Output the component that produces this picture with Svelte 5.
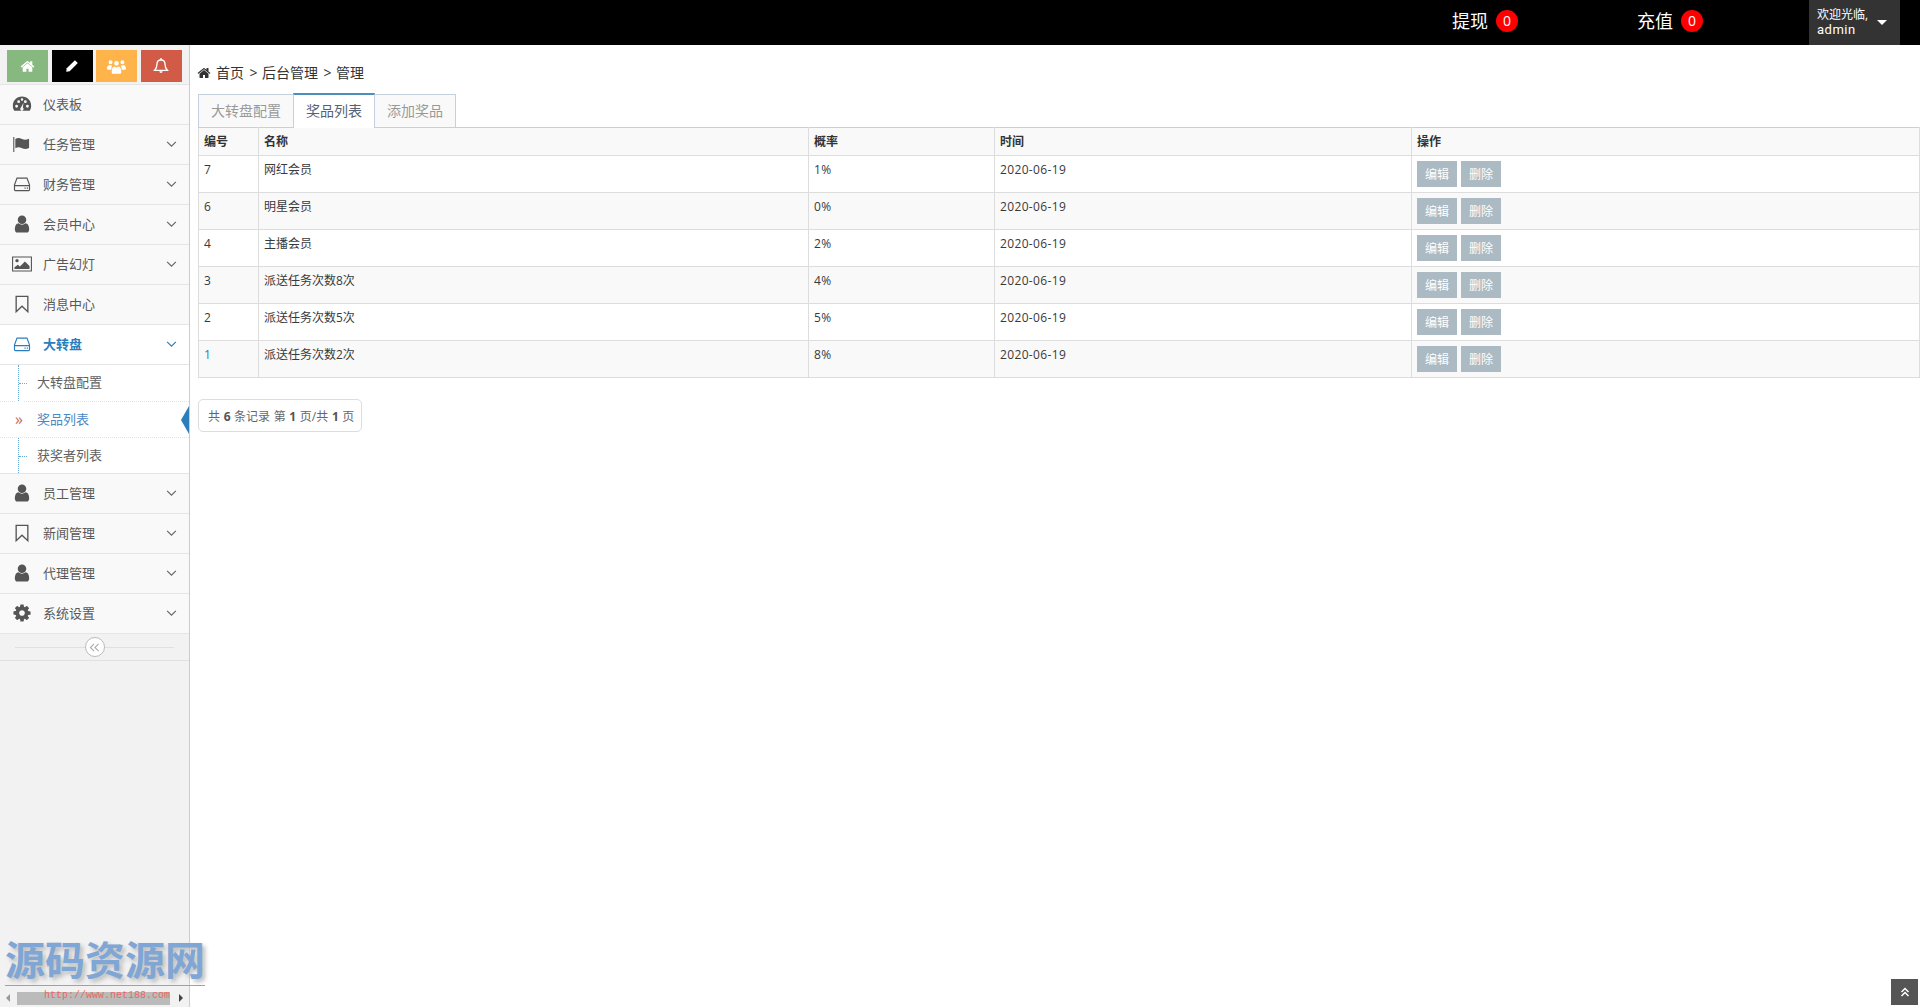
<script>
  const home = "M1472 992v480q0 26-19 45t-45 19h-384v-384h-256v384h-384q-26 0-45-19t-19-45v-480q0-1 .5-3t.5-3l575-474 575 474q1 2 1 6zm223-69l-62 74q-8 9-21 11h-3q-13 0-21-7l-692-577-692 577q-12 8-24 7-13-2-21-11l-62-74q-8-10-7-23.5t11-21.5l719-599q32-26 76-26t76 26l244 204v-195q0-14 9-23t23-9h192q14 0 23 9t9 23v408l219 182q10 8 11 21.5t-7 23.5z";
  const user = "M1536 1399q0 109-62.5 187t-150.5 78h-854q-88 0-150.5-78t-62.5-187q0-85 8.5-160.5t31.5-152 58.5-131 94-89 134.5-34.5q131 128 313 128t313-128q76 0 134.5 34.5t94 89 58.5 131 31.5 152 8.5 160.5zm-256-887q0 159-112.5 271.5t-271.5 112.5-271.5-112.5-112.5-271.5 112.5-271.5 271.5-112.5 271.5 112.5 112.5 271.5z";
  const cog = "M1152 896q0-106-75-181t-181-75-181 75-75 181 75 181 181 75 181-75 75-181zm512-109v222q0 12-8 23t-20 13l-185 28q-19 54-39 91 35 50 107 138 10 12 10 25t-9 23q-27 37-99 108t-94 71q-12 0-26-9l-138-108q-44 23-91 38-16 136-29 186-7 28-36 28h-222q-14 0-24.5-8.5t-11.5-21.5l-28-184q-49-16-90-37l-141 107q-10 9-25 9-14 0-25-11-126-114-165-168-7-10-7-23 0-12 8-23 15-21 51-66.5t54-70.5q-27-50-41-99l-183-27q-13-2-21-12.5t-8-23.5v-222q0-12 8-23t19-13l186-28q14-46 39-92-40-57-107-138-10-12-10-24 0-10 9-23 26-36 98.5-107.5t94.5-71.5q13 0 26 10l138 107q44-23 91-38 16-136 29-186 7-28 36-28h222q14 0 24.5 8.5t11.5 21.5l28 184q49 16 90 37l142-107q9-9 24-9 13 0 25 10 129 119 165 170 7 8 7 22 0 12-8 23-15 21-51 66.5t-54 70.5q26 50 41 98l183 28q13 2 21 12.5t8 23.5z";

  const navTop = [
    { label: "仪表板", icon: "gauge" },
    { label: "任务管理", icon: "flag", arrow: true },
    { label: "财务管理", icon: "hdd", arrow: true },
    { label: "会员中心", icon: "user", arrow: true },
    { label: "广告幻灯", icon: "picture", arrow: true },
    { label: "消息中心", icon: "bookmark" },
  ];
  const navBottom = [
    { label: "员工管理", icon: "user", arrow: true },
    { label: "新闻管理", icon: "bookmark", arrow: true },
    { label: "代理管理", icon: "user", arrow: true },
    { label: "系统设置", icon: "cog", arrow: true },
  ];
  const rows = [
    { id: 7, name: "网红会员", rate: "1%" },
    { id: 6, name: "明星会员", rate: "0%" },
    { id: 4, name: "主播会员", rate: "2%" },
    { id: 3, name: "派送任务次数8次", rate: "4%" },
    { id: 2, name: "派送任务次数5次", rate: "5%" },
    { id: 1, name: "派送任务次数2次", rate: "8%", link: true },
  ];
</script>

{#snippet navIcon(name)}
  {#if name === "gauge"}
    <svg class="ico" viewBox="0 0 24 24" width="20" height="20"><path fill="currentColor" fill-rule="evenodd" d="M12 3C5.6 3 1 8 1 14c0 2.2.6 4.200 1.700 6h18.600c1.100-1.800 1.700-3.800 1.700-6 0-6-4.600-11-11-11zM5.500 13a1.700 1.700 0 1 1 0 3.400 1.700 1.700 0 0 1 0-3.400zM8 7.500a1.700 1.700 0 1 1 0 3.400 1.700 1.700 0 0 1 0-3.400zM13.500 6.500a1.500 1.500 0 1 1-3 0 1.500 1.500 0 0 1 3 0zM18.500 13a1.700 1.700 0 1 1 0 3.400 1.700 1.700 0 0 1 0-3.400zM16 7.500a1.700 1.700 0 1 1 0 3.400 1.700 1.700 0 0 1 0-3.400zM13.800 10.500l-.8 5.700a2 2 0 1 1-2.200 0z"/></svg>
  {:else if name === "flag"}
    <svg class="ico" viewBox="0 0 24 24" width="20" height="20"><path fill="currentColor" d="M1.500 3.500h1.300v18H1.500zM4 6c3-1.600 5-1.200 8 0s5 1 8.500-.4v11.200c-3.500 1.400-5.500 1.400-8.500.2s-5-1.500-8 0z"/></svg>
  {:else if name === "hdd"}
    <svg class="ico" viewBox="0 0 24 24" width="20" height="20"><path fill="none" stroke="currentColor" stroke-width="1.400" d="M6 5h12l3 8v6a1 1 0 0 1-1 1H4a1 1 0 0 1-1-1v-6zM3 14h18"/><path fill="currentColor" d="M15 16.200h1.400v1.400H15zM17.800 16.200h1.400v1.400h-1.400z"/></svg>
  {:else if name === "user"}
    <svg class="ico" viewBox="0 0 1792 1792" width="20" height="20"><path fill="currentColor" d={user}/></svg>
  {:else if name === "picture"}
    <svg class="ico" viewBox="0 0 24 24" width="20" height="20"><path fill="none" stroke="currentColor" stroke-width="1.300" d="M.7 3.700h22.600v16.600H.7z"/><circle fill="currentColor" cx="6" cy="8" r="2"/><path fill="currentColor" d="M3 18v-2l4-3 2.500 2 6-6 5.500 5.500V18z"/></svg>
  {:else if name === "bookmark"}
    <svg class="ico" viewBox="0 0 24 24" width="20" height="20"><path fill="none" stroke="currentColor" stroke-width="1.600" d="M5 2.800h14v18.400l-7-6.500-7 6.500z"/></svg>
  {:else}
    <svg class="ico" viewBox="0 0 1792 1792" width="20" height="20"><path fill="currentColor" d={cog}/></svg>
  {/if}
{/snippet}

{#snippet chevron()}
  <svg class="chev" viewBox="0 0 12 8" width="11" height="7"><path fill="none" stroke="currentColor" stroke-width="1.300" d="M1 1l5 5 5-5"/></svg>
{/snippet}

{#snippet navRow(item)}
  <li class="nav-item">
    <span class="nav-icon">{@render navIcon(item.icon)}</span>
    <span class="nav-label">{item.label}</span>
    {#if item.arrow}{@render chevron()}{/if}
  </li>
{/snippet}

<div class="page">
  <header class="topbar">
    <div class="top-link"><span class="top-text">提现</span><span class="badge">0</span></div>
    <div class="top-link second"><span class="top-text">充值</span><span class="badge">0</span></div>
    <div class="user-box">
      <span class="user-text">欢迎光临,<br /><span class="user-name">admin</span></span>
      <span class="caret"></span>
    </div>
  </header>

  <div class="body">
    <aside class="sidebar">
      <div class="shortcuts">
        <button class="sc green" aria-label="home"><svg viewBox="0 0 1792 1792" width="15" height="15"><path fill="currentColor" d={home}/></svg></button>
        <button class="sc black" aria-label="edit"><svg viewBox="0 0 24 24" width="14" height="14"><path fill="currentColor" d="M17 2l5 5L8 21l-6 1 1-6z"/></svg></button>
        <button class="sc orange" aria-label="group"><svg viewBox="0 0 24 24" width="19" height="19"><path fill="currentColor" d="M12 5a3 3 0 1 1 0 6 3 3 0 0 1 0-6zM4.500 4a2.500 2.500 0 1 1 0 5 2.500 2.500 0 0 1 0-5zM19.500 4a2.500 2.500 0 1 1 0 5 2.500 2.500 0 0 1 0-5zM0 15c0-3 1.500-5 3.500-5 1 .8 2 1 3 .8C6 12 5.500 13.500 5.500 16H1zM24 15c0-3-1.500-5-3.500-5-1 .8-2 1-3 .8.500 1.200 1 2.700 1 5.200H23zM7 21c-.8 0-1-.6-1-1.500 0-4 1-7.500 3.500-7.500 1.600 1.200 3.400 1.200 5 0 2.500 0 3.500 3.500 3.500 7.500 0 .9-.2 1.500-1 1.500z"/></svg></button>
        <button class="sc red" aria-label="bell"><svg viewBox="0 0 24 24" width="16" height="16"><path fill="none" stroke="currentColor" stroke-width="2" d="M12 3c-4 0-6 2.500-6 6 0 5-1.500 7.500-3.500 9.500h19C19.500 16.500 18 14 18 9c0-3.500-2-6-6-6z"/><path fill="currentColor" d="M9.500 20h5a2.500 2.500 0 0 1-5 0zM11 0h2v3h-2z"/></svg></button>
      </div>

      <ul class="nav">
        {#each navTop as item}
          {@render navRow(item)}
        {/each}
        <li class="nav-item active">
          <span class="nav-icon">{@render navIcon("hdd")}</span>
          <span class="nav-label">大转盘</span>
          {@render chevron()}
        </li>
        <li class="sub">
          <div class="sub-item">大转盘配置</div>
          <div class="sub-item current"><span class="mark">»</span>奖品列表<span class="pointer"></span></div>
          <div class="sub-item">获奖者列表</div>
        </li>
        {#each navBottom as item}
          {@render navRow(item)}
        {/each}
      </ul>

      <div class="collapse">
        <span class="collapse-btn">
          <svg viewBox="0 0 12 10" width="11" height="9"><path fill="none" stroke="#aaa" stroke-width="1.200" d="M5.500 1L1.500 5l4 4M10.500 1l-4 4 4 4"/></svg>
        </span>
      </div>
    </aside>

    <main class="main">
      <div class="crumbs">
        <svg viewBox="0 0 1792 1792" width="14" height="14"><path fill="#333" d={home}/></svg>
        <span>首页</span><span class="sep">&gt;</span><span>后台管理</span><span class="sep">&gt;</span><span>管理</span>
      </div>

      <div class="tabs">
        <div class="tab">大转盘配置</div>
        <div class="tab on">奖品列表</div>
        <div class="tab">添加奖品</div>
      </div>

      <table>
        <colgroup>
          <col style="width:60px" /><col style="width:550px" /><col style="width:186px" /><col style="width:417px" /><col />
        </colgroup>
        <thead>
          <tr><th>编号</th><th>名称</th><th>概率</th><th>时间</th><th>操作</th></tr>
        </thead>
        <tbody>
          {#each rows as row}
            <tr>
              <td class="num" class:link={row.link}>{row.id}</td>
              <td>{row.name}</td>
              <td class="num">{row.rate}</td>
              <td class="num">2020-06-19</td>
              <td class="ops"><button class="op">编辑</button><button class="op">删除</button></td>
            </tr>
          {/each}
        </tbody>
      </table>

      <div class="pager">共 <b>6</b> 条记录 第 <b>1</b> 页/共 <b>1</b> 页</div>
    </main>
  </div>

  <div class="watermark">
    <div class="wm-text">源码资源网</div>
    <div class="wm-url">http://www.net188.com</div>
  </div>
  <div class="hscroll">
    <span class="arrow-l"></span>
    <span class="thumb"></span>
    <span class="arrow-r"></span>
  </div>
  <button class="to-top" aria-label="top"><svg viewBox="0 0 10 10" width="10" height="10"><path fill="none" stroke="#fff" stroke-width="1.500" d="M1.500 5L5 1.500 8.500 5M1.500 9L5 5.500 8.500 9"/></svg></button>
</div>

<style>
  :global(body) {
    margin: 0;
    background: #fff;
    font-family: "Open Sans", "Noto Sans CJK SC", sans-serif;
    font-size: 13px;
    color: #393939;
  }

  .page {
    position: relative;
    height: 1007px;
    overflow: hidden;
  }

  .topbar {
    height: 45px;
    background: #000;
    display: flex;
    align-items: center;
    color: #fff;
    padding-left: 1452px;
  }

  .top-link {
    width: 185px;
    flex: none;
    display: flex;
    align-items: center;
    gap: 8px;
    font-size: 18px;
    padding-bottom: 3px;
  }

  .top-link.second {
    width: 172px;
  }

  .top-text {
    margin-top: -2px;
  }

  .badge {
    width: 22px;
    height: 22px;
    border-radius: 50%;
    background: #f00;
    font-size: 14px;
    line-height: 22px;
    text-align: center;
  }

  .user-box {
    width: 91px;
    height: 45px;
    box-sizing: border-box;
    padding: 0 0 2px 8px;
    background: #333;
    display: flex;
    align-items: center;
    font-size: 12px;
    line-height: 15px;
    position: relative;
  }

  .user-name {
    font-family: Roboto, sans-serif;
    font-size: 13px;
    letter-spacing: 0.5px;
  }

  .caret {
    position: absolute;
    left: 68px;
    top: 20px;
    border: 5px solid transparent;
    border-top-color: #fff;
    border-bottom: 0;
  }

  .body {
    display: flex;
    height: 962px;
  }

  .sidebar {
    width: 190px;
    box-sizing: border-box;
    flex: none;
    background: #f2f2f2;
    border-right: 1px solid #ccc;
  }

  .shortcuts {
    height: 39px;
    box-sizing: border-box;
    padding: 5px 0 0 7px;
    display: flex;
    gap: 3.67px;
  }

  .sc {
    width: 41px;
    height: 32px;
    border: 0;
    padding: 0;
    color: #fff;
    display: flex;
    align-items: center;
    justify-content: center;
  }

  .sc.green { background: #87b87f; }
  .sc.black { background: #000; }
  .sc.orange { background: #ffb44b; }
  .sc.red { background: #d15b47; }

  .nav {
    list-style: none;
    margin: 0;
    padding: 0;
    border-top: 1px solid #e5e5e5;
  }

  .nav-item {
    height: 38px;
    padding-bottom: 1px;
    background: #f9f9f9;
    border-bottom: 1px solid #e5e5e5;
    display: flex;
    align-items: center;
    color: #585858;
    position: relative;
  }

  .nav-item.active {
    background: #fff;
    color: #2b7dbc;
    font-weight: 700;
  }

  .nav-icon {
    width: 43px;
    flex: none;
    display: flex;
    justify-content: center;
    padding-left: 1px;
    box-sizing: border-box;
    color: #555;
  }

  .active .nav-icon {
    color: #2b7dbc;
  }

  .nav-label {
    flex: 1;
    padding-bottom: 2px;
  }

  .chev {
    color: #666;
    margin-right: 12px;
  }

  .active .chev {
    color: #2b7dbc;
  }

  .sub {
    background: #fff;
    border-bottom: 1px solid #e5e5e5;
    height: 108px;
    position: relative;
  }

  .sub::before {
    content: "";
    position: absolute;
    left: 18px;
    top: 0;
    bottom: 0;
    border-left: 1px dotted #6aa8d8;
  }

  .sub-item {
    height: 36px;
    box-sizing: border-box;
    padding-left: 37px;
    line-height: 35px;
    color: #616161;
    position: relative;
    border-top: 1px dotted #e4e4e4;
  }

  .sub-item:first-child {
    border-top: 0;
  }

  .sub-item::before {
    content: "";
    position: absolute;
    left: 19px;
    top: 18px;
    width: 8px;
    border-top: 1px dotted #6aa8d8;
  }

  .sub-item.current {
    color: #4b88c4;
  }

  .sub-item.current::before {
    display: none;
  }

  .mark {
    position: absolute;
    left: 15px;
    top: -1px;
    color: #c86c5c;
    font-size: 16px;
    background: #fff;
    line-height: 36px;
  }

  .pointer {
    position: absolute;
    right: 0;
    top: 4px;
    border: 14px solid transparent;
    border-right: 8px solid #2b7dbc;
    border-left: 0;
  }

  .collapse {
    height: 26px;
    border-bottom: 1px solid #e0e0e0;
    display: flex;
    align-items: center;
    justify-content: center;
    position: relative;
  }

  .collapse::before {
    content: "";
    position: absolute;
    left: 15px;
    right: 15px;
    top: 13px;
    border-top: 1px solid #e0e0e0;
  }

  .collapse-btn {
    position: relative;
    width: 18px;
    height: 18px;
    border: 1px solid #bbb;
    border-radius: 50%;
    background: #fff;
    display: flex;
    align-items: center;
    justify-content: center;
  }

  .main {
    flex: 1;
    min-width: 0;
    padding-left: 8px;
  }

  .crumbs {
    height: 49px;
    box-sizing: border-box;
    padding-top: 18px;
    display: flex;
    align-items: flex-start;
    gap: 5.5px;
    font-size: 14px;
    line-height: 20px;
    color: #333;
  }

  .crumbs svg {
    margin: 3px -0.5px 0 -1px;
  }

  .sep {
    width: 7px;
    overflow: visible;
  }

  .tabs {
    display: flex;
    align-items: flex-start;
    height: 33px;
    position: relative;
    z-index: 1;
  }

  .tab {
    padding: 0 12px;
    font-size: 14px;
    line-height: 31px;
    color: #999;
    background: #f9f9f9;
    border: 1px solid #c5d0dc;
    border-bottom: 0;
    margin-right: -1px;
    box-sizing: border-box;
    height: 33px;
  }

  .tab.on {
    color: #576373;
    background: #fff;
    border-top: 2px solid #4c8fbd;
    line-height: 31px;
    margin-top: -1px;
    height: 35px;
    position: relative;
  }

  table {
    width: 100%;
    border-collapse: collapse;
    table-layout: fixed;
    font-size: 12px;
    line-height: 17px;
    color: #393939;
  }

  th, td {
    border: 1px solid #ddd;
    text-align: left;
    vertical-align: top;
    box-sizing: border-box;
  }

  th {
    background: #f9f9f9;
    padding: 5px;
    height: 28px;
    font-weight: 700;
    color: #333;
    border-top-color: #c5d0dc;
  }

  td {
    padding: 5px;
    height: 37px;
  }

  td.num {
    letter-spacing: 0.35px;
  }

  tbody tr:nth-child(even) td {
    background: #f9f9f9;
  }

  td.link {
    color: #2b7dbc;
  }

  .ops {
    padding-top: 5px;
    padding-bottom: 0;
  }

  .op {
    width: 40px;
    height: 26px;
    padding: 0;
    border: 0;
    margin-right: 4px;
    background: #abbac3;
    color: #fff;
    font: inherit;
    vertical-align: top;
  }

  .pager {
    margin-top: 21px;
    width: fit-content;
    height: 33px;
    box-sizing: border-box;
    padding: 0 7px 0 9px;
    line-height: 33px;
    border: 1px solid #ddd;
    border-radius: 5px;
    font-size: 12px;
    word-spacing: 0.5px;
    color: #666;
  }

  .pager b {
    color: #555;
  }

  .watermark {
    position: absolute;
    left: 5px;
    top: 935px;
    width: 200px;
  }

  .wm-text {
    font-size: 40px;
    line-height: 50px;
    font-weight: 700;
    color: #7fa6d4;
    text-shadow: 3px 3px 4px #bbb;
    white-space: nowrap;
    border-bottom: 1px solid #b89a8a;
  }

  .wm-url {
    font-family: "Liberation Mono", monospace;
    font-size: 10px;
    line-height: 14px;
    padding-left: 39px;
    margin-top: 3px;
    color: #e66;
    position: relative;
    z-index: 1;
  }

  .hscroll {
    position: absolute;
    left: 0;
    top: 992px;
    width: 189px;
    height: 13px;
  }

  .thumb {
    position: absolute;
    left: 17px;
    width: 153px;
    top: 0;
    bottom: 0;
    background: #bbb;
  }

  .arrow-l, .arrow-r {
    position: absolute;
    top: 2px;
    border: 4px solid transparent;
  }

  .arrow-l {
    left: 6px;
    border-right: 4px solid #999;
    border-left: 0;
  }

  .arrow-r {
    left: 179px;
    border-left: 4px solid #444;
    border-right: 0;
  }

  .to-top {
    position: absolute;
    left: 1891px;
    top: 979px;
    width: 27px;
    height: 26px;
    border: 0;
    padding: 0;
    background: #555;
    display: flex;
    align-items: center;
    justify-content: center;
  }
</style>
